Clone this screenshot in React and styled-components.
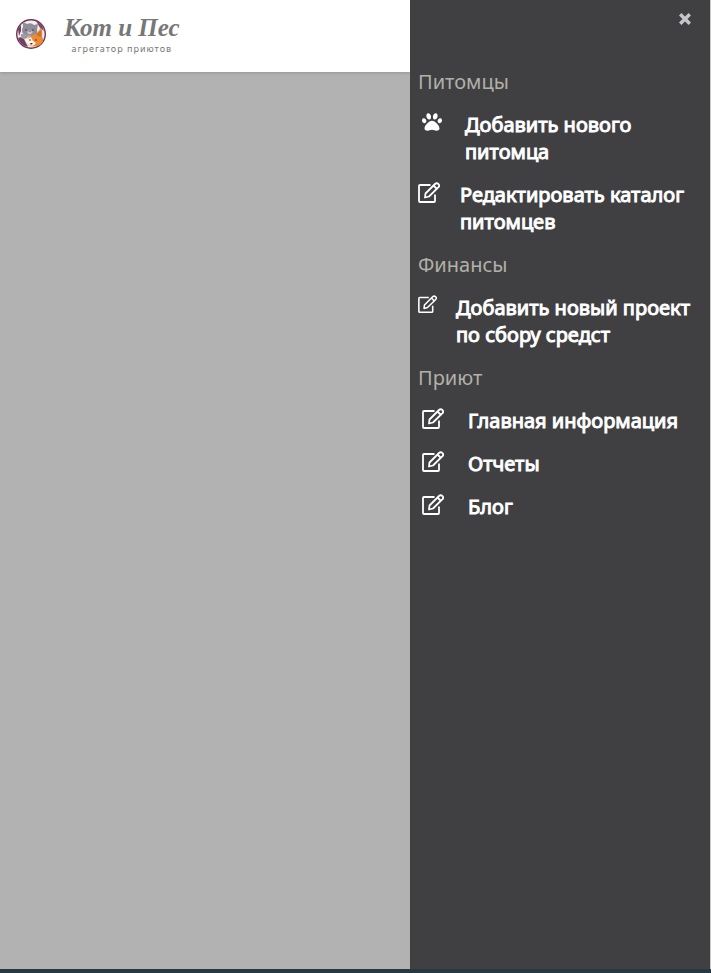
import React from "react";
import styled, { createGlobalStyle } from "styled-components";
import { FaPaw } from "react-icons/fa";

const GlobalStyle = createGlobalStyle`
  *, *::before, *::after { box-sizing: border-box; }
  body {
    margin: 0;
    background: #c8c8c8;
    font-family: "Noto Sans", "Open Sans", sans-serif;
  }
`;

const Page = styled.div`
  display: flex;
  min-height: 100vh;
  padding-right: 1px;
  border-bottom: 4px solid #263842;
`;

const Backdrop = styled.main`
  flex: 1;
  min-width: 0;
  background: #b2b2b2;
`;

const Header = styled.header`
  display: flex;
  align-items: center;
  height: 72px;
  padding: 0 16px 4px;
  background: #ffffff;
  box-shadow: 0 1px 3px rgba(0, 0, 0, 0.16);
`;

const Brand = styled.a`
  display: flex;
  align-items: center;
  gap: 18px;
  color: #777777;
  text-decoration: none;
`;

const BrandText = styled.span`
  display: flex;
  flex-direction: column;
  align-items: center;
`;

const BrandName = styled.span`
  font: italic 700 25px/29px "Liberation Serif", serif;
  white-space: nowrap;
`;

const Tagline = styled.span`
  font-size: 9px;
  line-height: 13px;
  letter-spacing: 1px;
  white-space: nowrap;
`;

const Drawer = styled.aside`
  display: flex;
  flex-direction: column;
  width: 300px;
  background: #404042;
`;

const DrawerTop = styled.div`
  display: flex;
  justify-content: flex-end;
  padding: 8px 14px 38px;
`;

const CloseButton = styled.button`
  display: grid;
  place-items: center;
  width: 22px;
  height: 22px;
  padding: 0;
  border: 0;
  background: none;
  color: #c5c5cb;
  cursor: pointer;
`;

const Menu = styled.nav`
  display: flex;
  flex-direction: column;
  gap: 16px;
  padding: 0 8px;
`;

const Group = styled.section`
  display: flex;
  flex-direction: column;
  gap: 16px;
`;

const GroupTitle = styled.h2`
  margin: 0;
  color: #b1b0a9;
  font-size: 20px;
  font-weight: 400;
  line-height: 27px;
`;

const Items = styled.ul`
  display: flex;
  flex-direction: column;
  gap: 16px;
  margin: 0;
  padding: 0;
  list-style: none;
`;

const ItemLink = styled.a`
  display: flex;
  align-items: flex-start;
  gap: ${({ $gap }) => $gap}px;
  padding-left: ${({ $inset }) => $inset}px;
  color: #ffffff;
  font-size: 20px;
  line-height: 27px;
  -webkit-text-stroke: 1px currentColor;
  text-decoration: none;
`;

const ItemIcon = styled.span`
  display: flex;
  flex: none;
  padding-top: 1px;
`;

function EditIcon({ size }) {
  return (
    <svg width={size} height={size} viewBox="0 0 22 22" fill="none" stroke="currentColor" strokeWidth="1.800" strokeLinejoin="round" aria-hidden="true">
      <path d="M12.500 3H2Q1 3 1 4V19Q1 20 2 20H16Q17 20 17 19V12.500" />
      <path d="M7.500 11.500 17 2Q18.500 .6 20.200 1.800 22 3.500 20.500 5.200L11 14.500 7 15.500Z" />
      <path d="m15.500 3.500 3.500 3.500" />
    </svg>
  );
}

function CloseIcon() {
  return (
    <svg width="12" height="12" viewBox="0 0 12 12" stroke="currentColor" strokeWidth="3.400" aria-hidden="true">
      <path d="m1.200 1.200 9.600 9.600m0-9.600-9.600 9.600" />
    </svg>
  );
}

function PetsLogo() {
  return (
    <svg width="30" height="30" viewBox="0 0 30 30" aria-hidden="true">
      <circle cx="15" cy="15" r="14.300" fill="#f6eff2" stroke="#6b3553" strokeWidth="1.400" />
      <path d="M2 10 5 6 5 12 3 17ZM2 19Q5 17 8 20L12 28Q4 26 2 19Z" fill="#704060" />
      <path d="M20 2 26 6 28 12 24 9Z" fill="#7c4966" />
      <path d="M7 3 11 5Q15 3 18 6L22 5 21 11Q23 16 16 17L9 16Q4 13 7 8Z" fill="#8f8e98" />
      <path d="M5 15Q4 20 9 20L14 17 9 15Z" fill="#9d9ba5" />
      <path d="M11 13Q14 10 17 13L15 15H12Z" fill="#c8c3cc" />
      <circle cx="10" cy="11" r=".8" fill="#403440" />
      <circle cx="17" cy="11" r=".8" fill="#403440" />
      <path d="M13 12h2l-1 1Z" fill="#583848" />
      <path d="M12 19Q15 15 19 16L25 9Q27 12 26 17 29 22 24 26 18 29 12 26 10 22 12 19Z" fill="#ec8b32" />
      <path d="M20 16 25 11 25 18Z" fill="#d36b29" />
      <path d="M11 20 15 18 17 22 20 24Q18 28 13 26 10 24 11 20Z" fill="#fff4e6" />
      <circle cx="14" cy="21" r=".8" fill="#4e273e" />
      <circle cx="20" cy="21" r=".8" fill="#4e273e" />
      <path d="M14 24h3l-2 2Z" fill="#4e273e" />
    </svg>
  );
}

const groups = [
  {
    title: "Питомцы",
    items: [
      { label: "Добавить нового питомца", icon: <FaPaw size={20} />, inset: 4, gap: 23 },
      { label: "Редактировать каталог питомцев", icon: <EditIcon size={22} />, inset: 0, gap: 20 },
    ],
  },
  {
    title: "Финансы",
    items: [
      { label: "Добавить новый проект по сбору средст", icon: <EditIcon size={19} />, inset: 0, gap: 19 },
    ],
  },
  {
    title: "Приют",
    items: ["Главная информация", "Отчеты", "Блог"].map((label) => ({
      label,
      icon: <EditIcon size={22} />,
      inset: 4,
      gap: 24,
    })),
  },
];

export default function App() {
  return (
    <>
      <GlobalStyle />
      <Page>
        <Backdrop>
          <Header>
            <Brand href="#">
              <PetsLogo />
              <BrandText>
                <BrandName>Кот и Пес</BrandName>
                <Tagline>агрегатор приютов</Tagline>
              </BrandText>
            </Brand>
          </Header>
        </Backdrop>
        <Drawer>
          <DrawerTop>
            <CloseButton type="button" aria-label="Закрыть">
              <CloseIcon />
            </CloseButton>
          </DrawerTop>
          <Menu>
            {groups.map((group) => (
              <Group key={group.title}>
                <GroupTitle>{group.title}</GroupTitle>
                <Items>
                  {group.items.map((item) => (
                    <li key={item.label}>
                      <ItemLink href="#" $inset={item.inset} $gap={item.gap}>
                        <ItemIcon>{item.icon}</ItemIcon>
                        <span>{item.label}</span>
                      </ItemLink>
                    </li>
                  ))}
                </Items>
              </Group>
            ))}
          </Menu>
        </Drawer>
      </Page>
    </>
  );
}
